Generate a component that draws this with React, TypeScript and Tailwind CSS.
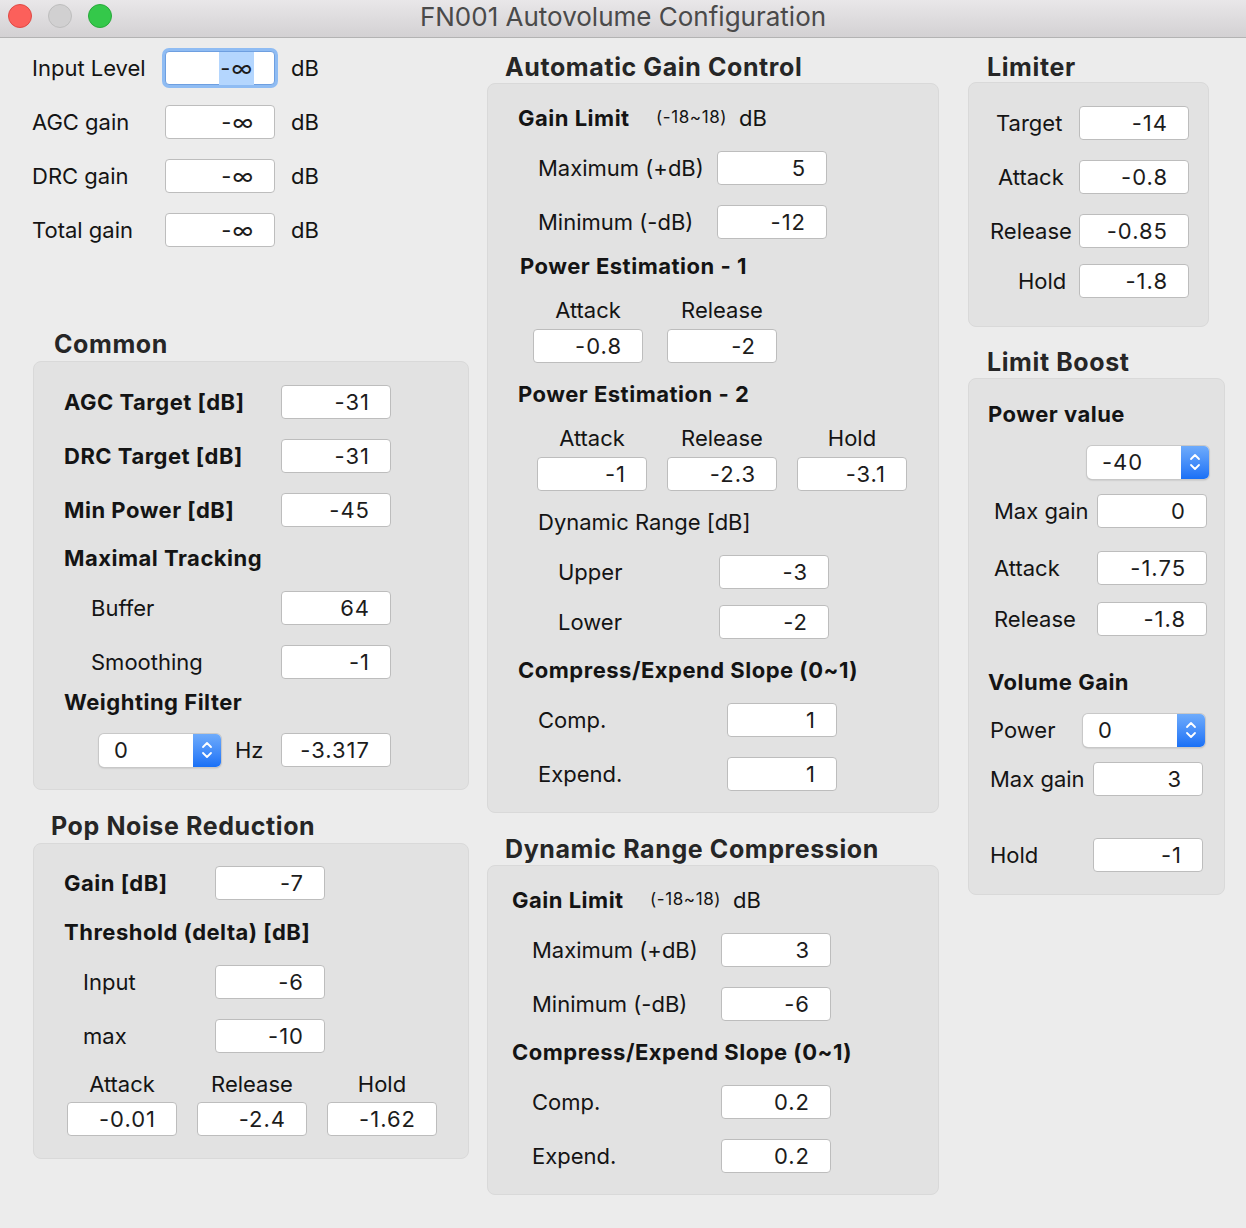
import React from 'react';

type Kids = { children?: React.ReactNode };

const Field: React.FC<{ v: string; className?: string }> = ({ v, className = '' }) => (
  <div
    className={`h-[34px] w-[110px] shrink-0 rounded-[4px] border border-[#bdbdbd] bg-white flex items-center justify-end pr-[20px] text-[22px] tracking-[1px] text-[#1c1c1c] ${className}`}
  >
    {v}
  </div>
);

const FocusField: React.FC<{ v: string }> = ({ v }) => (
  <div className="h-[34px] w-[110px] shrink-0 rounded-[4px] border border-[#6e9fe0] bg-white shadow-[0_0_0_3px_#8fbcf3] flex items-center justify-end pr-[20px] text-[22px] text-[#1c1c1c]">
    <span className="bg-[#b4d6fe] px-[1px] tracking-[1px]">{v}</span>
  </div>
);

const Combo: React.FC<{ v: string }> = ({ v }) => (
  <div className="h-[33px] w-[122px] shrink-0 flex rounded-[5px] bg-white shadow-[0_0_0_1px_#c8c8c8,0_1px_2px_rgba(0,0,0,0.25)] overflow-hidden">
    <div className="flex-1 flex items-center pl-[15px] text-[22px] tracking-[1px] text-[#1c1c1c]">{v}</div>
    <div className="w-[28px] flex items-center justify-center bg-gradient-to-b from-[#6eabfb] to-[#1870f6]">
      <svg width="12" height="22" viewBox="0 0 12 22">
        <path d="M2 8 L6 4 L10 8" fill="none" stroke="white" strokeWidth="1.8" strokeLinecap="round" strokeLinejoin="round" />
        <path d="M2 14 L6 18 L10 14" fill="none" stroke="white" strokeWidth="1.8" strokeLinecap="round" strokeLinejoin="round" />
      </svg>
    </div>
  </div>
);

const Row: React.FC<Kids & { className: string }> = ({ className, children }) => (
  <div className={`flex items-center h-[34px] ${className}`}>{children}</div>
);

const L: React.FC<Kids & { className?: string }> = ({ className = '', children }) => (
  <span className={`shrink-0 whitespace-nowrap text-[22px] text-[#141414] ${className}`}>{children}</span>
);

const B: React.FC<Kids & { className?: string }> = ({ className = '', children }) => (
  <span className={`shrink-0 whitespace-nowrap text-[22px] font-bold tracking-[0.5px] text-[#141414] ${className}`}>{children}</span>
);

const Heading: React.FC<Kids & { className: string }> = ({ className, children }) => (
  <div className={`h-[30px] leading-[30px] text-[25px] font-bold tracking-[0.6px] text-[#262626] whitespace-nowrap ${className}`}>{children}</div>
);

const Box: React.FC<Kids & { className: string }> = ({ className, children }) => (
  <div className={`rounded-[8px] bg-[#e2e2e2] border border-[#d9d9d9] ${className}`}>{children}</div>
);

const Range: React.FC = () => (
  <>
    <span className="w-[83px] shrink-0 text-[17px] tracking-[0.6px] text-[#141414]">(-18~18)</span>
    <L>dB</L>
  </>
);

export default function App() {
  return (
    <div className="w-[1246px] h-[1228px] bg-[#ececec] font-['Inter','Liberation_Sans',sans-serif] overflow-hidden">
      {/* title bar */}
      <div className="relative h-[38px] border-b border-[#b3b3b3] bg-gradient-to-b from-[#e9e7e9] to-[#d3d1d3] flex items-center justify-center">
        <div className="absolute left-[8px] top-[4px] flex gap-[16px]">
          <div className="w-[24px] h-[24px] rounded-full bg-[#fc605b] border border-[#df4944]" />
          <div className="w-[24px] h-[24px] rounded-full bg-[#d1d0d1] border border-[#bebebe]" />
          <div className="w-[24px] h-[24px] rounded-full bg-[#34c84a] border border-[#28a93a]" />
        </div>
        <span className="text-[26px] leading-[30px] -mt-[3px] text-[#4a4a4a]">FN001 Autovolume Configuration</span>
      </div>

      <div className="flex">
        {/* left column */}
        <div className="ml-[33px] w-[436px] shrink-0">
          <Row className="mt-[13px]">
            <L className="w-[133px] -ml-[1px]">Input Level</L>
            <FocusField v="-∞" />
            <L className="ml-[16px]">dB</L>
          </Row>
          <Row className="mt-[20px]">
            <L className="w-[133px] -ml-[1px]">AGC gain</L>
            <Field v="-∞" />
            <L className="ml-[16px]">dB</L>
          </Row>
          <Row className="mt-[20px]">
            <L className="w-[133px] -ml-[1px]">DRC gain</L>
            <Field v="-∞" />
            <L className="ml-[16px]">dB</L>
          </Row>
          <Row className="mt-[20px]">
            <L className="w-[133px] -ml-[1px]">Total gain</L>
            <Field v="-∞" />
            <L className="ml-[16px]">dB</L>
          </Row>

          <Heading className="mt-[82px] pl-[21px]">Common</Heading>
          <Box className="mt-[2px] h-[429px]">
            <Row className="mt-[23px] pl-[30px]">
              <B className="w-[217px]">AGC Target [dB]</B>
              <Field v="-31" />
            </Row>
            <Row className="mt-[20px] pl-[30px]">
              <B className="w-[217px]">DRC Target [dB]</B>
              <Field v="-31" />
            </Row>
            <Row className="mt-[20px] pl-[30px]">
              <B className="w-[217px]">Min Power [dB]</B>
              <Field v="-45" />
            </Row>
            <Row className="mt-[14px] pl-[30px]">
              <B>Maximal Tracking</B>
            </Row>
            <Row className="mt-[16px] pl-[57px]">
              <L className="w-[190px]">Buffer</L>
              <Field v="64" />
            </Row>
            <Row className="mt-[20px] pl-[57px]">
              <L className="w-[190px]">Smoothing</L>
              <Field v="-1" />
            </Row>
            <Row className="mt-[6px] pl-[30px]">
              <B>Weighting Filter</B>
            </Row>
            <Row className="mt-[14px] pl-[65px]">
              <Combo v="0" />
              <L className="ml-[14px] w-[46px]">Hz</L>
              <Field v="-3.317" />
            </Row>
          </Box>

          <Heading className="mt-[21px] pl-[18px]">Pop Noise Reduction</Heading>
          <Box className="mt-[2px] h-[316px]">
            <Row className="mt-[22px] pl-[30px]">
              <B className="w-[151px]">Gain [dB]</B>
              <Field v="-7" />
            </Row>
            <Row className="mt-[15px] pl-[30px]">
              <B>Threshold (delta) [dB]</B>
            </Row>
            <Row className="mt-[16px] pl-[49px]">
              <L className="w-[132px]">Input</L>
              <Field v="-6" />
            </Row>
            <Row className="mt-[20px] pl-[49px]">
              <L className="w-[132px]">max</L>
              <Field v="-10" />
            </Row>
            <Row className="mt-[14px] pl-[33px] gap-[20px]">
              <L className="w-[110px] text-center">Attack</L>
              <L className="w-[110px] text-center">Release</L>
              <L className="w-[110px] text-center">Hold</L>
            </Row>
            <Row className="mt-[1px] pl-[33px] gap-[20px]">
              <Field v="-0.01" />
              <Field v="-2.4" />
              <Field v="-1.62" />
            </Row>
          </Box>
        </div>

        {/* middle column */}
        <div className="ml-[18px] w-[452px] shrink-0">
          <Heading className="mt-[14px] pl-[18px]">Automatic Gain Control</Heading>
          <Box className="mt-[1px] h-[730px]">
            <Row className="mt-[17px] pl-[30px]">
              <B className="w-[138px]">Gain Limit</B>
              <Range />
            </Row>
            <Row className="mt-[16px] pl-[50px]">
              <L className="w-[179px]">Maximum (+dB)</L>
              <Field v="5" />
            </Row>
            <Row className="mt-[20px] pl-[50px]">
              <L className="w-[179px]">Minimum (-dB)</L>
              <Field v="-12" />
            </Row>
            <Row className="mt-[10px] pl-[32px]">
              <B>Power Estimation - 1</B>
            </Row>
            <Row className="mt-[10px] pl-[45px] gap-[24px]">
              <L className="w-[110px] text-center">Attack</L>
              <L className="w-[110px] text-center">Release</L>
            </Row>
            <Row className="mt-[2px] pl-[45px] gap-[24px]">
              <Field v="-0.8" />
              <Field v="-2" />
            </Row>
            <Row className="mt-[14px] pl-[30px]">
              <B>Power Estimation - 2</B>
            </Row>
            <Row className="mt-[10px] pl-[49px] gap-[20px]">
              <L className="w-[110px] text-center">Attack</L>
              <L className="w-[110px] text-center">Release</L>
              <L className="w-[110px] text-center">Hold</L>
            </Row>
            <Row className="mt-[2px] pl-[49px] gap-[20px]">
              <Field v="-1" />
              <Field v="-2.3" />
              <Field v="-3.1" />
            </Row>
            <Row className="mt-[14px] pl-[50px]">
              <L>Dynamic Range [dB]</L>
            </Row>
            <Row className="mt-[16px] pl-[70px]">
              <L className="w-[161px]">Upper</L>
              <Field v="-3" />
            </Row>
            <Row className="mt-[16px] pl-[70px]">
              <L className="w-[161px]">Lower</L>
              <Field v="-2" />
            </Row>
            <Row className="mt-[14px] pl-[30px]">
              <B>Compress/Expend Slope (0~1)</B>
            </Row>
            <Row className="mt-[16px] pl-[50px]">
              <L className="w-[189px]">Comp.</L>
              <Field v="1" />
            </Row>
            <Row className="mt-[20px] pl-[50px]">
              <L className="w-[189px]">Expend.</L>
              <Field v="1" />
            </Row>
          </Box>

          <Heading className="mt-[21px] pl-[18px]">Dynamic Range Compression</Heading>
          <Box className="mt-[1px] h-[330px]">
            <Row className="mt-[17px] pl-[24px]">
              <B className="w-[138px]">Gain Limit</B>
              <Range />
            </Row>
            <Row className="mt-[16px] pl-[44px]">
              <L className="w-[189px]">Maximum (+dB)</L>
              <Field v="3" />
            </Row>
            <Row className="mt-[20px] pl-[44px]">
              <L className="w-[189px]">Minimum (-dB)</L>
              <Field v="-6" />
            </Row>
            <Row className="mt-[14px] pl-[24px]">
              <B>Compress/Expend Slope (0~1)</B>
            </Row>
            <Row className="mt-[16px] pl-[44px]">
              <L className="w-[189px]">Comp.</L>
              <Field v="0.2" />
            </Row>
            <Row className="mt-[20px] pl-[44px]">
              <L className="w-[189px]">Expend.</L>
              <Field v="0.2" />
            </Row>
          </Box>
        </div>

        {/* right column */}
        <div className="ml-[29px] w-[257px] shrink-0">
          <Heading className="mt-[14px] pl-[19px]">Limiter</Heading>
          <Box className="w-[241px] h-[245px]">
            <Row className="mt-[23px]">
              <L className="w-[110px] pl-[27px]">Target</L>
              <Field v="-14" />
            </Row>
            <Row className="mt-[20px]">
              <L className="w-[110px] pl-[29px]">Attack</L>
              <Field v="-0.8" />
            </Row>
            <Row className="mt-[20px]">
              <L className="w-[110px] pl-[21px]">Release</L>
              <Field v="-0.85" />
            </Row>
            <Row className="mt-[16px]">
              <L className="w-[110px] pl-[49px]">Hold</L>
              <Field v="-1.8" />
            </Row>
          </Box>

          <Heading className="mt-[20px] pl-[19px]">Limit Boost</Heading>
          <Box className="mt-[1px] h-[517px]">
            <Row className="mt-[18px] pl-[19px]">
              <B>Power value</B>
            </Row>
            <Row className="mt-[14px] pl-[118px]">
              <Combo v="-40" />
            </Row>
            <Row className="mt-[15px] pl-[25px]">
              <L className="w-[103px]">Max gain</L>
              <Field v="0" />
            </Row>
            <Row className="mt-[23px] pl-[25px]">
              <L className="w-[103px]">Attack</L>
              <Field v="-1.75" />
            </Row>
            <Row className="mt-[17px] pl-[25px]">
              <L className="w-[103px]">Release</L>
              <Field v="-1.8" />
            </Row>
            <Row className="mt-[29px] pl-[19px]">
              <B>Volume Gain</B>
            </Row>
            <Row className="mt-[14px] pl-[21px]">
              <L className="w-[93px]">Power</L>
              <Combo v="0" />
            </Row>
            <Row className="mt-[15px] pl-[21px]">
              <L className="w-[103px]">Max gain</L>
              <Field v="3" />
            </Row>
            <Row className="mt-[42px] pl-[21px]">
              <L className="w-[103px]">Hold</L>
              <Field v="-1" />
            </Row>
          </Box>
        </div>
      </div>
    </div>
  );
}
